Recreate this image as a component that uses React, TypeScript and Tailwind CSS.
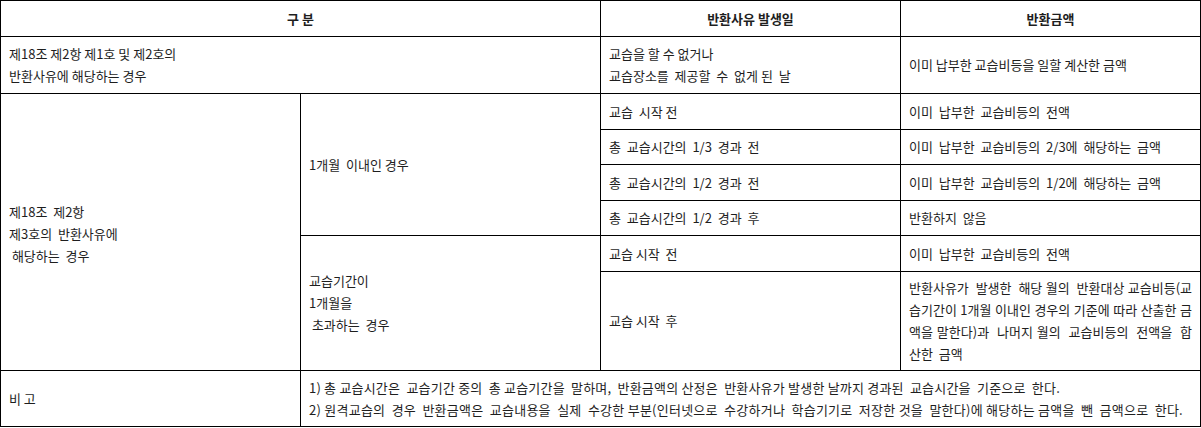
import React from "react";

const cell = "border border-black align-middle pl-2 pr-2 text-left";

// 1개월 이내 / 초과 구간별 행
const subRows = [
  { when: "교습  시작 전", amount: "이미  납부한  교습비등의  전액", h: "h-[36px]" },
  { when: "총  교습시간의  1/3  경과  전", amount: "이미  납부한  교습비등의  2/3에  해당하는  금액", h: "h-[35px]" },
  { when: "총  교습시간의  1/2  경과  전", amount: "이미  납부한  교습비등의  1/2에  해당하는  금액", h: "h-[36px]" },
  { when: "총  교습시간의  1/2  경과  후", amount: "반환하지  않음", h: "h-[35px]" },
];

const longLines = [
  "반환사유가  발생한  해당 월의  반환대상 교습비등(교",
  "습기간이 1개월 이내인 경우의 기준에 따라 산출한 금",
  "액을 말한다)과  나머지 월의  교습비등의  전액을  합",
];

export default function App() {
  return (
    <div className="w-[1201px] h-[428px] bg-white text-[#1e1e1e] font-['Noto_Sans_CJK_KR','Noto_Sans',sans-serif] text-[13px] leading-[22px]">
      <table className="w-[1200px] border-collapse table-fixed whitespace-pre">
        <colgroup>
          <col className="w-[300px]" />
          <col className="w-[300px]" />
          <col className="w-[300px]" />
          <col className="w-[300px]" />
        </colgroup>
        <tbody>
          <tr className="h-[36px]">
            <th colSpan={2} className="border border-black align-middle text-center font-bold">구 분</th>
            <th className="border border-black align-middle text-center font-bold">반환사유 발생일</th>
            <th className="border border-black align-middle text-center font-bold">반환금액</th>
          </tr>
          <tr className="h-[57px]">
            <td colSpan={2} className={cell}>
              <div>제18조 제2항 제1호 및 제2호의</div>
              <div>반환사유에 해당하는 경우</div>
            </td>
            <td className={cell}>
              <div>교습을 할 수 없거나</div>
              <div>교습장소를  제공할  수  없게 된  날</div>
            </td>
            <td className={cell}>이미 납부한 교습비등을 일할 계산한 금액</td>
          </tr>
          {subRows.map((r, i) => (
            <tr key={i} className={r.h}>
              {i === 0 && (
                <td rowSpan={6} className={cell}>
                  <div className="pt-[3px]">제18조  제2항</div>
                  <div>제3호의  반환사유에</div>
                  <div> 해당하는  경우</div>
                </td>
              )}
              {i === 0 && (
                <td rowSpan={4} className={cell}>
                  1개월  이내인 경우
                </td>
              )}
              <td className={cell}>{r.when}</td>
              <td className={cell}>{r.amount}</td>
            </tr>
          ))}
          <tr className="h-[36px]">
            <td rowSpan={2} className={cell}>
              <div>교습기간이</div>
              <div>1개월을</div>
              <div> 초과하는  경우</div>
            </td>
            <td className={cell}>교습 시작  전</td>
            <td className={cell}>이미  납부한  교습비등의  전액</td>
          </tr>
          <tr className="h-[99px]">
            <td className={cell}>교습 시작  후</td>
            <td className={cell + " whitespace-normal"}>
              {longLines.map((l, i) => (
                <div key={i} className="whitespace-pre text-justify [text-align-last:justify]">
                  {l}
                </div>
              ))}
              <div className="whitespace-pre">산한  금액</div>
            </td>
          </tr>
          <tr className="h-[56px]">
            <td className={cell}>비 고</td>
            <td colSpan={3} className={cell}>
              <div className="tracking-[0.2px]">1) 총 교습시간은  교습기간 중의  총 교습기간을  말하며,  반환금액의 산정은  반환사유가 발생한 날까지 경과된  교습시간을  기준으로  한다.</div>
              <div className="tracking-[0.25px]">2) 원격교습의  경우  반환금액은  교습내용을  실제  수강한 부분(인터넷으로  수강하거나  학습기기로  저장한 것을  말한다)에 해당하는 금액을  뺀  금액으로  한다.</div>
            </td>
          </tr>
        </tbody>
      </table>
    </div>
  );
}
